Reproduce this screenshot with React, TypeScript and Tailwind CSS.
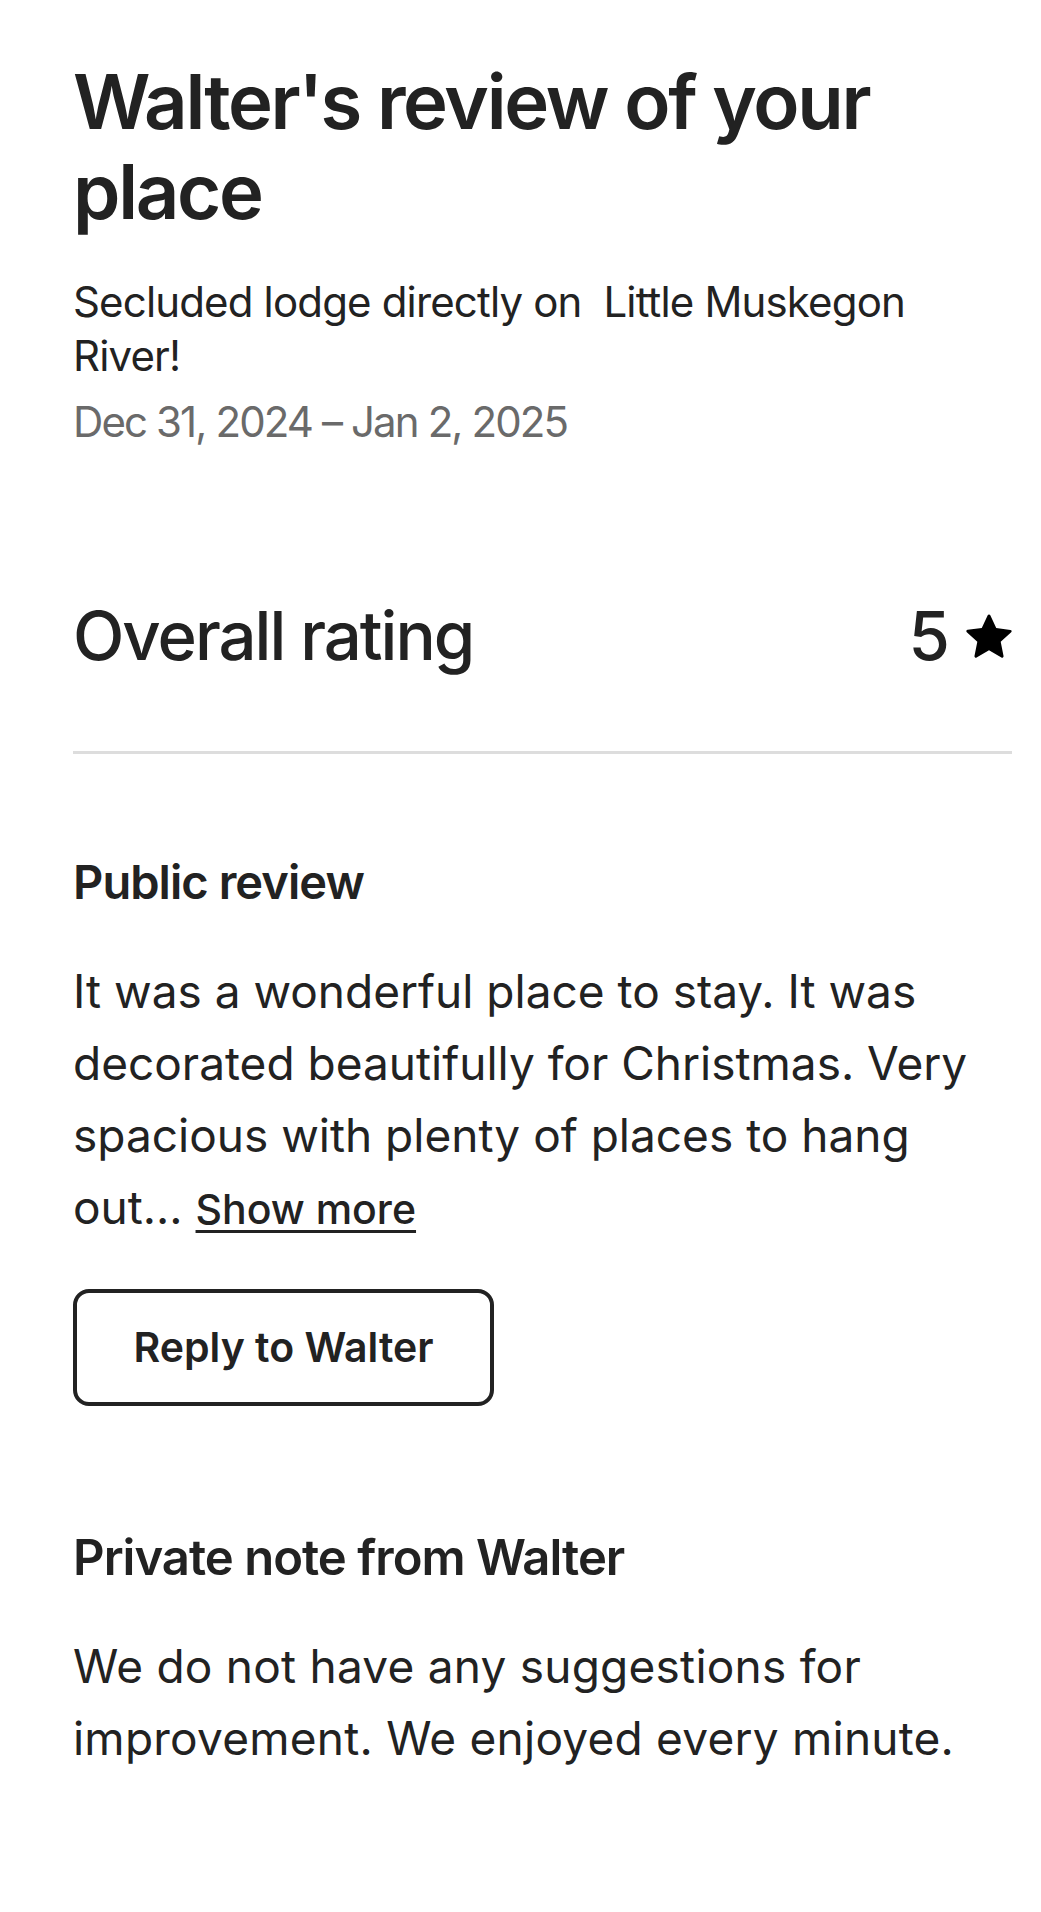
import React from "react";

function StarIcon() {
  return (
    <svg viewBox="0 0 32 32" className="w-[46px] h-[46px]" fill="#000">
      <path d="M15.1 1.58l-4.13 8.88-9.86 1.27a1 1 0 0 0-.54 1.74l7.3 6.57-1.97 9.85a1 1 0 0 0 1.48 1.06l8.62-5 8.63 5a1 1 0 0 0 1.48-1.06l-1.97-9.85 7.3-6.57a1 1 0 0 0-.55-1.73l-9.86-1.28-4.12-8.88a1 1 0 0 0-1.82 0z" />
    </svg>
  );
}

export default function App() {
  return (
    <div
      className="min-h-[1912px] w-full bg-white text-[#222222]"
      style={{ fontFamily: "Inter, 'Noto Sans', sans-serif" }}
    >
      <div className="pl-[73px] pr-[29px] pt-[56px] pb-[120px]">
        <h1 className="text-[76px] leading-[90px] font-semibold tracking-[-0.03em]">
          Walter's review of your place
        </h1>

        <div className="mt-[39px] text-[42px] leading-[54px] tracking-[-0.02em]">
          Secluded lodge directly on&nbsp; Little Muskegon River!
        </div>
        <div className="mt-[12px] text-[42px] leading-[54px] tracking-[-0.045em] text-[#6a6a6a]">
          Dec 31, 2024 – Jan 2, 2025
        </div>

        <div className="mt-[147px] flex items-center justify-between h-[80px]">
          <h2 className="text-[67px] font-medium tracking-[-0.03em]">
            Overall rating
          </h2>
          <div className="flex items-center gap-[16px]">
            <span className="text-[67px] font-medium">5</span>
            <StarIcon />
          </div>
        </div>

        <div className="mt-[75px] h-[3px] bg-[#dddddd]" />

        <h3 className="mt-[100px] text-[47px] leading-[56px] font-semibold tracking-[-0.02em]">
          Public review
        </h3>
        <p className="mt-[45px] text-[46px] leading-[72px]">
          It was a wonderful place to stay. It was decorated beautifully for
          Christmas. Very spacious with plenty of places to hang out...{" "}
          <span className="cursor-pointer text-[41px] font-medium underline underline-offset-[6px] decoration-[3px]">
            Show more
          </span>
        </p>

        <button className="mt-[44px] h-[117px] w-[421px] rounded-[16px] border-[4px] border-[#222222] text-[41px] font-semibold">
          Reply to Walter
        </button>

        <h3 className="mt-[124px] text-[49px] leading-[56px] font-semibold tracking-[-0.02em]">
          Private note from Walter
        </h3>
        <p className="mt-[44px] text-[46px] leading-[72px] tracking-[0.005em]">
          We do not have any suggestions for improvement. We enjoyed every
          minute.
        </p>
      </div>
    </div>
  );
}
